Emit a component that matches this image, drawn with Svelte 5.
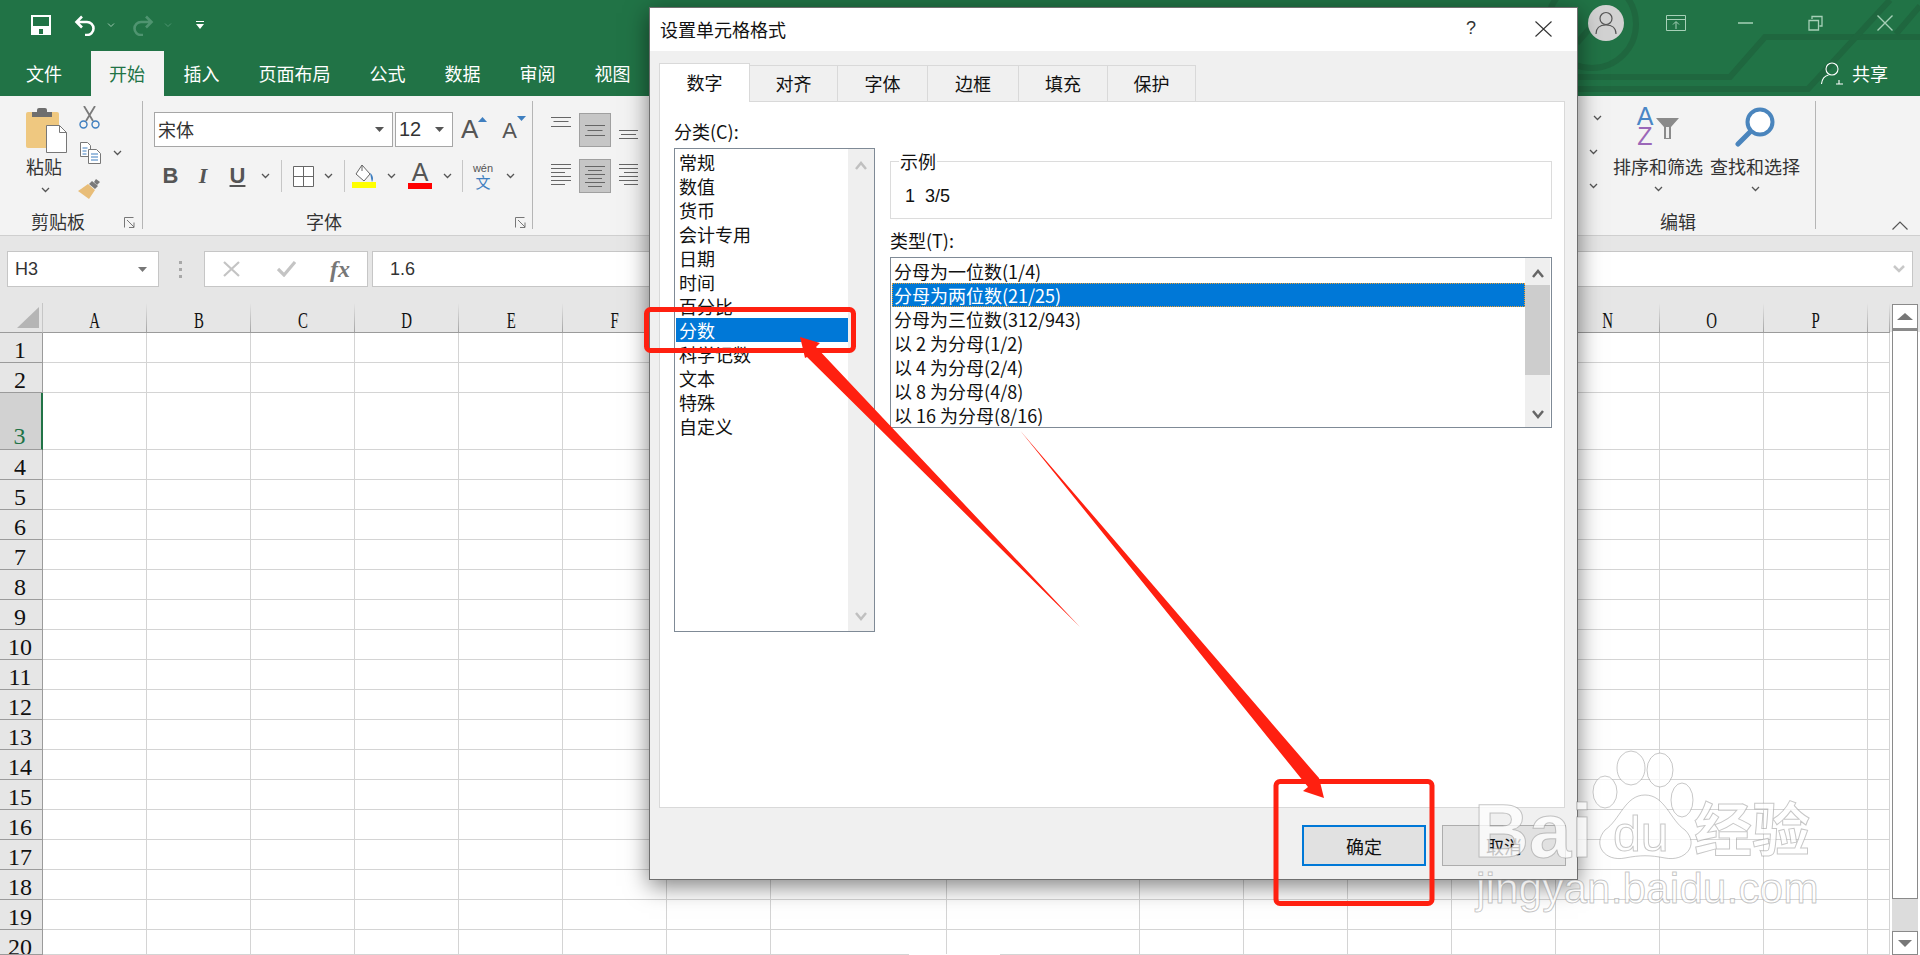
<script>
  const tabs = ['插入', '页面布局', '公式', '数据', '审阅', '视图'];
  const colNames = ['A','B','C','D','E','F','G','H','I','J','K','L','M','N','O','P',''];
  const rows = Array.from({ length: 20 }, (_, i) => i + 1);
  const categories = ['常规','数值','货币','会计专用','日期','时间','百分比','分数','科学记数','文本','特殊','自定义'];
  const types = ['分母为一位数(1/4)','分母为两位数(21/25)','分母为三位数(312/943)','以 2 为分母(1/2)','以 4 为分母(2/4)','以 8 为分母(4/8)','以 16 为分母(8/16)'];
  const dlgTabs = ['对齐','字体','边框','填充','保护'];
</script>

{#snippet chev()}
  <svg class="chev" width="9" height="6" viewBox="0 0 9 6"><path d="M1 1l3.5 3.5L8 1" fill="none" stroke="#555" stroke-width="1.3"/></svg>
{/snippet}
{#snippet launcher()}
  <svg class="launcher" width="12" height="11" viewBox="0 0 12 11"><path d="M.5 10.500V.5h9M3 3l7 7M10 5.500v5H5" fill="none" stroke="#777"/></svg>
{/snippet}
{#snippet lines(w, ys, ws, anchor)}
  <svg width={w} height={ys[ys.length-1]+1} viewBox="0 0 {w} {ys[ys.length-1]+1}">
    {#each ys as y, i}
      {@const lw = ws[i % ws.length]}
      {@const x = anchor === 'l' ? 0 : anchor === 'r' ? w - lw : (w - lw) / 2}
      <rect {x} {y} width={lw} height="1" fill="#666"/>
    {/each}
  </svg>
{/snippet}

<div class="app">
  <header class="top">
    <svg class="circuit" width="1920" height="96" viewBox="0 0 1920 96">
      <g fill="none" stroke="#1f673f" stroke-width="6">
        <circle cx="1592" cy="24" r="44"/>
        <path d="M1440 77H1730L1765 37H1920"/>
        <path d="M1440 89H1808L1890 0"/>
        <path d="M1577 43L1604 12"/>
        <path d="M1896 34L1920 6"/>
      </g>
    </svg>
    <div class="qat">
      <svg class="i-save" width="20" height="20" viewBox="0 0 20 20">
        <path d="M1 1h18v18H1z" fill="#217346" stroke="#fff" stroke-width="2"/>
        <path d="M1 11h18v8H1z" fill="#fff"/><path d="M8 14h4v5H8z" fill="#217346"/>
      </svg>
      <svg class="i-undo" width="22" height="21" viewBox="0 0 22 21"><path d="M8 1.500L2.500 7 8 12.500M3 7h10a6.500 6.500 0 0 1 0 13h-2" fill="none" stroke="#fff" stroke-width="2.600"/></svg>
      <svg class="q-chev" width="8" height="5" viewBox="0 0 8 5"><path d="M1 .5l3 3 3-3" fill="none" stroke="#9cc7ae"/></svg>
      <svg class="i-redo" width="22" height="21" viewBox="0 0 22 21"><path d="M14 1.500L19.500 7 14 12.500M19 7H9a6.500 6.500 0 0 0 0 13h2" fill="none" stroke="#4f9470" stroke-width="2.600"/></svg>
      <svg class="q-chev" width="8" height="5" viewBox="0 0 8 5"><path d="M1 .5l3 3 3-3" fill="none" stroke="#4f9470"/></svg>
      <svg class="i-cust" width="8" height="10" viewBox="0 0 8 10"><path d="M0 0h8v1H0zM0 3h8L4 8z" fill="#fff"/></svg>
      <div class="winbox">
        <div class="avatar">
          <svg width="22" height="24" viewBox="0 0 22 24"><circle cx="11" cy="7.500" r="6" fill="none" stroke="#555" stroke-width="1.200"/><path d="M1 23c0-6 4-9 10-9s10 3 10 9" fill="none" stroke="#555" stroke-width="1.200"/></svg>
        </div>
        <svg class="w w1" width="20" height="16" viewBox="0 0 20 16"><path d="M.5.500h19v15H.5zM.5 4.500h19M10 14V7M7 9.500L10 6.500l3 3" fill="none" stroke="#a6d0b7"/></svg>
        <svg class="w w2" width="15" height="2" viewBox="0 0 15 2"><path d="M0 1h15" stroke="#a6d0b7" stroke-width="1.500"/></svg>
        <svg class="w w3" width="15" height="16" viewBox="0 0 15 16"><path d="M1 5.500h9.500V15H1zM4 4V1.500h10V11h-2.500" fill="none" stroke="#a6d0b7" stroke-width="1.300"/></svg>
        <svg class="w w4" width="16" height="16" viewBox="0 0 16 16"><path d="M.5.500l15 15M15.500.5l-15 15" stroke="#a6d0b7" stroke-width="1.400"/></svg>
      </div>
    </div>
    <nav class="tabs">
      <span class="tab">文件</span>
      <span class="tab active">开始</span>
      {#each tabs as t}<span class="tab">{t}</span>{/each}
      <div class="share">
        <svg width="22" height="23" viewBox="0 0 22 23"><circle cx="11" cy="7" r="6" fill="none" stroke="#fff" stroke-width="1.100"/><path d="M.5 22c.5-5 3-8 7-9M15 22h7M18 18v4.500" fill="none" stroke="#fff" stroke-width="1.100"/></svg>
        <span>共享</span>
      </div>
    </nav>
  </header>

  <section class="ribbon">
    <div class="group g-clip">
      <div class="gbody clip">
        <div class="paste">
          <svg width="42" height="46" viewBox="0 0 42 46">
            <rect x="0" y="5" width="33" height="36" rx="2" fill="#efc880"/>
            <path d="M6 5h5V3a2 2 0 0 1 2-2h6a2 2 0 0 1 2 2v2h5v5H6z" fill="#6e6e6e"/>
            <path d="M20.500 18.500h13l7 7v20h-20z" fill="#fff" stroke="#777"/>
            <path d="M33.500 18.500v7h7" fill="none" stroke="#777"/>
          </svg>
          <span class="plabel">粘贴</span>
          {@render chev()}
        </div>
        <div class="clip-tools">
          <svg width="21" height="23" viewBox="0 0 21 23">
            <path d="M5 0l9 15M16 0L7 15" stroke="#7a7a7a" stroke-width="1.800" fill="none"/>
            <circle cx="4.500" cy="18.500" r="3.500" fill="none" stroke="#3f7fc0" stroke-width="1.400"/>
            <circle cx="16.500" cy="18.500" r="3.500" fill="none" stroke="#3f7fc0" stroke-width="1.400"/>
          </svg>
          <div class="copy-row">
            <svg width="21" height="22" viewBox="0 0 21 22">
              <path d="M.5.500h7l3 3v11H.5z" fill="#fff" stroke="#777"/>
              <path d="M8.500 7.500h8l4 4v10h-12z" fill="#fff" stroke="#777"/>
              <path d="M2.500 6h5M2.500 9h4M2.500 12h4M11 12h7M11 15h7M11 18h7" stroke="#3f7fc0"/>
            </svg>
            {@render chev()}
          </div>
          <svg width="24" height="21" viewBox="0 0 24 21">
            <path d="M14 3l6 5-3 3-6-5z" fill="#7a7a7a"/><path d="M18 1l4 3-3 3-3-3z" fill="#7a7a7a"/>
            <path d="M10 6l7 6-6 9-11-8 3-2z" fill="#e8bd78"/>
          </svg>
        </div>
      </div>
      <div class="glabel lab-clip"><span>剪贴板</span>{@render launcher()}</div>
    </div>

    <div class="group g-font">
      <div class="gbody fontb">
        <div class="f-row1">
          <div class="combo fname"><span>宋体</span><svg width="9" height="5" viewBox="0 0 9 5"><path d="M0 0h9L4.500 5z" fill="#555"/></svg></div>
          <div class="combo fsize"><span>12</span><svg width="9" height="5" viewBox="0 0 9 5"><path d="M0 0h9L4.500 5z" fill="#555"/></svg></div>
          <div class="grow"><span>A</span><svg width="9" height="5" viewBox="0 0 9 5"><path d="M0 5h9L4.500 0z" fill="#3f7fc0"/></svg></div>
          <div class="shrink"><span>A</span><svg width="9" height="5" viewBox="0 0 9 5"><path d="M0 0h9L4.500 5z" fill="#3f7fc0"/></svg></div>
        </div>
        <div class="f-row2">
          <b class="fb">B</b>
          <i class="fi">I</i>
          <span class="fu">U</span>
          {@render chev()}
          <span class="sep"></span>
          <svg width="21" height="21" viewBox="0 0 21 21"><path d="M.5.500h20v20H.5zM10.500.5v20M.5 10.500h20" fill="#fff" stroke="#666"/></svg>
          {@render chev()}
          <span class="sep"></span>
          <svg width="24" height="24" viewBox="0 0 24 24">
            <path d="M10 1l8 9-6 7-8-7z" fill="#fff" stroke="#666"/><path d="M10 1v6" stroke="#666"/>
            <path d="M18 9c3 2 4 6 2 9-1-3-1-5-2-9z" fill="#3f7fc0"/>
            <rect x="0" y="18" width="24" height="6" fill="#ffff00"/>
          </svg>
          {@render chev()}
          <div class="fcolor"><span>A</span><i></i></div>
          {@render chev()}
          <span class="sep"></span>
          <div class="wen"><span class="w-a">wén</span><span class="w-b">文</span></div>
          {@render chev()}
        </div>
      </div>
      <div class="glabel lab-font"><span>字体</span>{@render launcher()}</div>
    </div>

    <div class="group g-align">
      <div class="al-grid">
        <div class="al al-top">{@render lines(20, [0, 4, 9], [20, 15, 20], 'c')}</div>
        <div class="al-on">{@render lines(20, [0, 5, 10], [20, 15, 20], 'c')}</div>
        <div class="al al-bot">{@render lines(19, [0, 4, 8], [19, 15, 19], 'c')}</div>
        <div class="al">{@render lines(20, [0, 4, 8, 12, 16, 20], [20, 20, 14], 'l')}</div>
        <div class="al-on">{@render lines(20, [0, 4, 8, 12, 16, 20], [20, 14], 'c')}</div>
        <div class="al">{@render lines(19, [0, 4, 8, 12, 16, 20], [19, 19, 14], 'r')}</div>
      </div>
      <div class="al-chevs">{@render chev()}{@render chev()}{@render chev()}</div>
    </div>

    <div class="group g-edit">
      <div class="gbody edit">
        <div class="ebtn">
          <div class="eicon sort">
            <span class="az"><span class="a">A</span><span class="z">Z</span></span>
            <svg width="23" height="21" viewBox="0 0 23 21"><path d="M0 0h23l-8 9v12h-7V9z" fill="#8a8a8a"/><path d="M10 9h3v11h-3z" fill="#eee"/></svg>
          </div>
          <span>排序和筛选</span>
          {@render chev()}
        </div>
        <div class="ebtn">
          <div class="eicon">
            <svg width="40" height="40" viewBox="0 0 40 40"><circle cx="25" cy="15" r="12.500" fill="#fff" stroke="#4a85bd" stroke-width="4"/><path d="M15 25L3 37" stroke="#4a85bd" stroke-width="5" stroke-linecap="round"/></svg>
          </div>
          <span>查找和选择</span>
          {@render chev()}
        </div>
      </div>
      <div class="glabel lab-edit"><span>编辑</span></div>
    </div>

    <div class="collapse">
      <svg width="16" height="9" viewBox="0 0 16 9"><path d="M.5 8.500L8 1l7.500 7.500" fill="none" stroke="#555" stroke-width="1.200"/></svg>
    </div>
  </section>

  <section class="fbar">
    <div class="namebox"><span>H3</span><svg width="9" height="5" viewBox="0 0 9 5"><path d="M0 0h9L4.500 5z" fill="#777"/></svg></div>
    <div class="dots"><i></i><i></i><i></i></div>
    <div class="fxbox">
      <svg width="17" height="16" viewBox="0 0 17 16"><path d="M1 1l15 14M16 1L1 15" stroke="#c4c4c4" stroke-width="2.200"/></svg>
      <svg width="19" height="16" viewBox="0 0 19 16"><path d="M1 8l6 6L18 1" fill="none" stroke="#c4c4c4" stroke-width="3.200"/></svg>
      <span class="fx">fx</span>
    </div>
    <div class="finput">
      <span>1.6</span>
      <svg width="12" height="8" viewBox="0 0 12 8"><path d="M1 1l5 5 5-5" fill="none" stroke="#c8c8c8" stroke-width="2.500"/></svg>
    </div>
  </section>

  <section class="sheetwrap">
    <div class="grid">
      <div class="corner"><svg width="22" height="21" viewBox="0 0 22 21"><path d="M22 0v21H0z" fill="#b5b5b5"/></svg></div>
      {#each colNames as c}
        <div class="colh"><span>{c}</span></div>
      {/each}
      {#each rows as r}
        <div class="rowh" class:sel={r === 3}>{r}</div>
        {#each colNames as c}<div class="cell"></div>{/each}
      {/each}
    </div>
    <div class="vscroll">
      <div class="sb-up"><svg width="16" height="7" viewBox="0 0 16 7"><path d="M0 7h16L8 0z" fill="#777"/></svg></div>
      <div class="sb-track"></div>
      <div class="sb-rest"></div>
      <div class="sb-down"><svg width="14" height="7" viewBox="0 0 14 7"><path d="M0 0h14L7 7z" fill="#777"/></svg></div>
    </div>
  </section>

  <div class="dialog">
    <div class="dtitle">
      <span>设置单元格格式</span>
      <span class="help">?</span>
      <svg width="17" height="16" viewBox="0 0 17 16"><path d="M.5.500l16 15M16.500.5l-16 15" stroke="#333" stroke-width="1.100"/></svg>
    </div>
    <div class="dbody">
      <div class="dtabs">
        <span class="dtab on">数字</span>
        {#each dlgTabs as t}<span class="dtab">{t}</span>{/each}
      </div>
      <div class="panel">
        <div class="pleft">
          <div class="plabel2">分类(C):</div>
          <div class="list">
            <div class="items">
              {#each categories as c}
                <div class="item" class:selected={c === '分数'}>{c}</div>
              {/each}
            </div>
            <div class="strip light">
              <svg width="12" height="9" viewBox="0 0 12 9"><path d="M1 8l5-6 5 6" fill="none" stroke="#c0c0c0" stroke-width="2.500"/></svg>
              <svg width="12" height="9" viewBox="0 0 12 9"><path d="M1 1l5 6 5-6" fill="none" stroke="#c0c0c0" stroke-width="2.500"/></svg>
            </div>
          </div>
        </div>
        <div class="pright">
          <div class="sample">
            <span class="legend">示例</span>
            <div class="sval">1&nbsp; 3/5</div>
          </div>
          <div class="plabel3">类型(T):</div>
          <div class="tlist">
            <div class="titems">
              {#each types as t, i}
                <div class="titem" class:tsel={i === 1}>{t}</div>
              {/each}
            </div>
            <div class="tstrip">
              <div class="tarrow"><svg width="12" height="9" viewBox="0 0 12 9"><path d="M1 8l5-6 5 6" fill="none" stroke="#666" stroke-width="2.500"/></svg></div>
              <div class="thumb"></div>
              <div class="tarrow end"><svg width="12" height="9" viewBox="0 0 12 9"><path d="M1 1l5 6 5-6" fill="none" stroke="#666" stroke-width="2.500"/></svg></div>
            </div>
          </div>
        </div>
      </div>
      <div class="dfoot">
        <div class="btn primary">确定</div>
        <div class="btn">取消</div>
      </div>
    </div>
  </div>

  <svg class="overlay" width="1920" height="955" viewBox="0 0 1920 955">
    <rect x="909" y="954" width="91" height="1" fill="#fff"/>
    <g class="wm">
      <ellipse cx="1605" cy="792" rx="12" ry="16"/>
      <ellipse cx="1631" cy="768" rx="14" ry="17"/>
      <ellipse cx="1660" cy="770" rx="13" ry="17"/>
      <ellipse cx="1682" cy="800" rx="11" ry="17"/>
      <path d="M1645 795C1665 795 1670 820 1685 830C1700 845 1685 862 1665 858C1650 855 1640 855 1625 858C1605 862 1592 845 1605 830C1620 820 1625 795 1645 795Z"/>
      <text x="1474" y="857" class="wm-bai">Bai</text>
      <text x="1613" y="851" class="wm-du">du</text>
      <text x="1694" y="851" class="wm-jy">经验</text>
      <text x="1476" y="903" class="wm-url">jingyan.baidu.com</text>
    </g>
    <g fill="none" stroke="#ff2010" stroke-width="5" stroke-linejoin="round">
      <rect x="646.500" y="309.500" width="207" height="41" rx="4"/>
      <rect x="1276" y="781.500" width="156" height="122" rx="4"/>
    </g>
    <polygon fill="#ff2010" points="800,337 820,343 816,347 1080,627 807,357 805,358 802,345"/>
    <polygon fill="#ff2010" points="1020.500,431 1312,770 1319,778 1324,798 1303,791 1308,787"/>
  </svg>
</div>

<style>
  :global(body) { margin: 0; background: #fff; }
  .app {
    position: relative;
    width: 1920px;
    height: 955px;
    overflow: hidden;
    font-family: "Noto Sans CJK SC", "Liberation Sans", sans-serif;
    font-size: 18px;
    color: #333;
    background: #fff;
  }
  svg { display: block; flex: none; }

  /* title bar */
  .top { position: relative; height: 96px; background: #217346; }
  .circuit { position: absolute; left: 0; top: 0; }
  .qat { position: relative; display: flex; align-items: center; height: 51px; padding: 0 0 0 32px; }
  .i-save { margin-top: -2px; margin-left: -1px; }
  .i-undo { margin-left: 23px; margin-top: -1px; }
  .q-chev { margin-left: 11px; }
  .i-redo { margin-left: 17px; margin-top: -1px; }
  .i-redo + .q-chev { margin-left: 10px; }
  .i-cust { margin-left: 24px; }
  .winbox { display: flex; align-items: center; margin-left: auto; height: 46px; align-self: flex-start; }
  .avatar {
    display: flex; align-items: center; justify-content: center;
    width: 36px; height: 36px; border-radius: 50%; background: #d2d2d2;
  }
  .w1 { margin-left: 42px; }
  .w2 { margin-left: 52px; }
  .w3 { margin-left: 55px; }
  .w4 { margin-left: 54px; margin-right: 27px; }
  .tabs { position: relative; display: flex; height: 45px; padding-left: 6.5px; align-items: stretch; color: #fff; }
  .tab { display: flex; align-items: center; padding: 0 19.5px 2px; line-height: 1; white-space: nowrap; }
  .tab.active { background: #f3f3f3; color: #217346; margin-left: 9.5px; padding: 0 19px 2px 18px; }
  .share { display: flex; align-items: center; margin-left: auto; margin-right: 32px; gap: 9px; margin-top: -1px; }

  /* ribbon */
  .ribbon { display: flex; height: 139px; background: #f3f3f3; border-bottom: 1px solid #cfcfcf; }
  .group { display: flex; flex-direction: column; flex: none; height: 128px; margin-top: 5px; border-right: 1px solid #b5b5b5; box-sizing: border-box; }
  .gbody { flex: 1; min-height: 0; }
  .glabel { display: flex; align-items: center; height: 22px; line-height: 22px; margin-bottom: -3px; color: #333; white-space: nowrap; }
  .launcher { margin-left: auto; margin-top: 2px; }
  .chev { flex: none; }

  .g-clip { width: 143px; }
  .clip { display: flex; padding: 6px 0 0 25px; }
  .paste { display: flex; flex-direction: column; align-items: center; width: 42px; margin-left: 1px; }
  .paste svg:first-child { align-self: flex-start; }
  .plabel { margin-top: 2px; line-height: 22px; margin-left: -6px; white-space: nowrap; }
  .paste .chev { margin-top: 10px; margin-left: -4px; }
  .clip-tools { display: flex; flex-direction: column; margin-left: 11px; margin-top: -1px; }
  .copy-row { display: flex; align-items: center; margin-top: 13px; margin-left: 1px; gap: 12px; }
  .clip-tools > svg:last-child { margin-top: 14px; margin-left: -1px; }
  .lab-clip { padding: 0 6px 0 31px; }
  .lab-font { padding: 0 5px 0 163px; }

  .g-font { width: 390px; }
  .fontb { padding: 11px 0 0 11px; }
  .f-row1 { display: flex; align-items: stretch; height: 35px; }
  .combo { display: flex; align-items: center; justify-content: space-between; box-sizing: border-box; background: #fff; border: 1px solid #a6a6a6; padding: 0 8px 0 3px; }
  .fname { width: 239px; }
  .fname span { margin-top: -2px; }
  .fsize { width: 58px; margin-left: 2px; font-family: "Liberation Sans", sans-serif; font-size: 20px; }
  .grow, .shrink { display: flex; align-items: flex-start; font-family: "Liberation Sans", sans-serif; color: #555; line-height: 1; }
  .grow { margin-left: 8px; font-size: 26px; padding-top: 4px; }
  .shrink { margin-left: 15px; font-size: 22px; padding-top: 8px; }
  .grow svg { margin: 1px 0 0 0; }
  .shrink svg { margin: -4px 0 0 0; }
  .f-row2 {
    display: grid;
    grid-template-columns: 33px 32px 37px 18px 14px 31px 18px 14px 26px 28px 30px 24px 6px 36px 18px;
    justify-items: center; align-items: center;
    height: 32px; margin-top: 13px;
    color: #555;
    font-family: "Liberation Sans", sans-serif;
  }
  .fb { font-size: 22px; line-height: 1; }
  .fi { font-size: 22px; line-height: 1; font-family: "Liberation Serif", serif; font-weight: 700; }
  .fu { font-size: 22px; line-height: 1; font-weight: 700; text-decoration: underline; text-underline-offset: 2px; }
  .sep { width: 1px; height: 32px; background: #c6c6c6; }
  .fcolor { display: flex; flex-direction: column; align-items: center; width: 24px; font-size: 25px; line-height: 19px; }
  .fcolor i { display: block; width: 24px; height: 6px; background: #f00; margin-top: 1px; }
  .wen { display: flex; flex-direction: column; align-items: center; width: 22px; }
  .w-a { font-size: 11px; line-height: 11px; color: #555; }
  .w-b { font-size: 15px; line-height: 15px; color: #3f7fc0; font-family: "Noto Sans CJK SC", sans-serif; }

  .g-align { display: flex; width: 1072px; border-right: 0; flex-direction: row; padding: 12px 0 0 18px; }
  .al-grid { display: grid; grid-template-columns: 20px 32px 19px; column-gap: 8px; grid-template-rows: 34px 34px; row-gap: 12px; height: 80px; }
  .al { display: flex; justify-content: center; align-items: flex-start; padding-top: 5px; }
  .al-top { padding-top: 4px; }
  .al-bot { padding-top: 17px; }
  .al-on { display: flex; justify-content: center; align-items: center; background: #c6c6c6; border: 1px solid #a0a0a0; box-sizing: border-box; }
  .al-chevs { display: flex; flex-direction: column; align-items: flex-end; margin-left: auto; padding: 2px 3px 0 0; gap: 28px; }
  .al-chevs :global(svg:not(:first-child)) { margin-right: 4px; }

  .g-edit { width: 211px; }
  .edit { display: flex; gap: 7px; padding: 0 0 0 8px; }
  .ebtn { display: flex; flex-direction: column; align-items: center; width: 90px; white-space: nowrap; line-height: 22px; }
  .eicon { display: flex; height: 50px; align-items: flex-end; justify-content: center; padding-bottom: 4px; box-sizing: border-box; }
  .ebtn .eicon + span { margin-top: 4px; }
  .ebtn .chev { margin-top: 9px; }
  .sort { gap: 3px; align-items: flex-start; padding-top: 5px; }
  .sort svg { margin-top: 12px; }
  .az { display: flex; flex-direction: column; align-items: center; font-family: "Liberation Sans", sans-serif; font-size: 25px; line-height: 20px; font-weight: 400; }
  .a { color: #4a86c5; }
  .z { color: #9b67b8; }
  .lab-edit { padding-left: 55px; }
  .collapse { flex: 1; display: flex; justify-content: flex-end; align-items: flex-end; padding: 0 12px 5px 0; }

  /* formula bar */
  .fbar { display: flex; align-items: flex-start; box-sizing: border-box; height: 67px; padding: 15px 7px 0 7px; background: #e6e6e6; }
  .namebox, .fxbox, .finput { box-sizing: border-box; height: 36px; background: #fff; border: 1px solid #c6c6c6; }
  .namebox { display: flex; align-items: center; justify-content: space-between; width: 152px; padding: 0 11px 0 7px; font-family: "Liberation Sans", sans-serif; }
  .dots { display: flex; flex-direction: column; gap: 4px; margin: 10px 0 0 20px; }
  .dots i { display: block; width: 3px; height: 3px; background: #a8a8a8; }
  .fxbox { display: flex; align-items: center; width: 164px; margin-left: 22px; padding-left: 18px; }
  .fxbox svg:nth-child(2) { margin-left: 37px; }
  .fx { margin-left: 34px; font-family: "Liberation Serif", serif; font-style: italic; font-weight: 700; font-size: 24px; color: #777; }
  .finput { flex: 1; display: flex; align-items: center; justify-content: space-between; margin-left: 4px; padding: 0 7px 0 17px; font-family: "Liberation Sans", sans-serif; }

  /* sheet */
  .sheetwrap { display: flex; height: 652px; background: linear-gradient(#e6e6e6 29px, #fff 29px); }
  .grid {
    display: grid;
    grid-template-columns: 43px repeat(7, 104px) 176px 193px repeat(7, 104px) 22px;
    grid-template-rows: 30px 30px 30px 57px repeat(16, 30px) 25px;
    width: 1890px;
    flex: none;
  }
  .corner { display: flex; align-items: center; justify-content: flex-end; padding-right: 3px; box-sizing: border-box; background: #e6e6e6; border-bottom: 1px solid #9b9b9b; border-right: 1px solid #c6c6c6; }
  .colh {
    box-sizing: border-box; text-align: center; border-bottom: 1px solid #9b9b9b;
    background: linear-gradient(#e6e6e6, #a4a4a4) no-repeat right top / 1px 100%, #e6e6e6;
    padding-top: 3px; line-height: 28px; color: #111;
    font-family: "Liberation Serif", serif; font-size: 24px;
  }
  .colh span { display: inline-block; transform: scaleX(.62); }
  .rowh {
    box-sizing: border-box; background: #e6e6e6; border-bottom: 1px solid #9b9b9b; border-right: 1px solid #9b9b9b;
    text-align: center; padding: 3px 2px 0 0; line-height: 28px; overflow: hidden; color: #111;
    font-family: "Liberation Serif", serif; font-size: 24px;
  }
  .rowh.sel { background: #d2d2d2; color: #217346; padding-top: 29px; border-right: 2px solid #217346; }
  .cell { box-sizing: border-box; border-right: 1px solid #d4d4d4; border-bottom: 1px solid #d4d4d4; }
  .vscroll { display: flex; flex-direction: column; box-sizing: border-box; width: 26px; margin: 1px 0 0 2px; height: 651px; }
  .sb-up, .sb-down { display: flex; align-items: center; justify-content: center; box-sizing: border-box; background: #fff; border: 1px solid #8a8a8a; flex: none; }
  .sb-up { height: 27px; border-bottom-width: 3px; }
  .sb-track { height: 568px; box-sizing: border-box; border: 1px solid #8a8a8a; border-top: 0; background: #fff; flex: none; }
  .sb-rest { height: 32px; background: #dcdcdc; flex: none; }
  .sb-down { flex: 1; }

  /* dialog */
  .dialog {
    position: absolute; left: 649px; top: 7px; width: 929px; height: 873px; box-sizing: border-box;
    display: flex; flex-direction: column;
    background: #f0f0f0; border: 1px solid #6f6f6f;
    box-shadow: 0 6px 22px rgba(0,0,0,.5);
    color: #111;
  }
  .dtitle { display: flex; align-items: center; flex: none; height: 43px; box-sizing: border-box; padding: 0 25px 2px 10px; background: #fff; }
  .dtitle span:first-child { flex: 1; }
  .help { margin-right: 59px; color: #333; font-family: "Liberation Sans", sans-serif; }
  .dbody { flex: 1; display: flex; flex-direction: column; min-height: 0; }
  .dtabs { display: flex; align-items: flex-end; height: 50px; padding-left: 9px; box-sizing: border-box; flex: none; position: relative; z-index: 1; }
  .dtab { display: flex; align-items: center; justify-content: center; box-sizing: border-box; width: 88px; height: 36px; padding-bottom: 2px; background: #f0f0f0; border: 1px solid #d9d9d9; border-left: 0; border-bottom: 0; }
  .dtab:nth-child(3) { width: 90px; }
  .dtab:nth-child(4) { width: 91px; }
  .dtab:nth-child(5) { width: 89px; }
  .dtab.on { width: 91px; height: 39px; background: #fff; border-left: 1px solid #d9d9d9; margin-bottom: -1px; }
  .panel { display: flex; box-sizing: border-box; height: 707px; width: 906px; margin-left: 9px; padding: 18px 0 0 14px; background: #fff; border: 1px solid #d9d9d9; flex: none; }
  .pleft { width: 201px; flex: none; }
  .plabel2, .plabel3 { line-height: 24px; }
  .plabel2 { margin: -1px 0 2px; }
  .list { display: flex; box-sizing: border-box; height: 484px; margin-top: 5px; border: 1px solid #7f8a96; background: #fff; }
  .items { flex: 1; padding: 1px 0 0 1px; }
  .item { line-height: 24px; height: 24px; padding-left: 3px; }
  .item.selected { background: #0078d7; color: #fff; }
  .strip { display: flex; flex-direction: column; justify-content: space-between; align-items: center; box-sizing: border-box; flex: none; width: 26px; background: #efefef; padding: 12px 0 10px; }
  .pright { width: 662px; margin-left: 15px; flex: none; }
  .sample { box-sizing: border-box; height: 58px; margin-top: 41px; border: 1px solid #dcdcdc; padding-left: 8px; }
  .legend { display: block; width: max-content; padding: 0 1px; margin-top: -13px; line-height: 24px; background: #fff; }
  .sval { margin: 11px 0 0 6px; line-height: 24px; font-family: "Liberation Sans", sans-serif; white-space: pre; }
  .plabel3 { margin-top: 9px; }
  .tlist { display: flex; box-sizing: border-box; height: 171px; width: 662px; margin-top: 5px; border: 1px solid #7f8a96; overflow: hidden; }
  .titems { flex: 1; padding: 1px 0 0 1px; overflow: hidden; min-width: 0; }
  .titem { height: 24px; line-height: 24px; padding-left: 2px; white-space: pre; }
  .titem.tsel { background: #0078d7; color: #fff; outline: 1px dotted #f0a030; outline-offset: -1px; }
  .tstrip { display: flex; flex-direction: column; flex: none; width: 25px; margin-right: 1px; background: #efefef; }
  .tarrow { display: flex; justify-content: center; align-items: center; height: 27px; flex: none; padding-top: 4px; box-sizing: border-box; }
  .tarrow.end { margin-top: auto; padding: 0; height: 26px; }
  .thumb { height: 90px; background: #cdcdcd; flex: none; }
  .dfoot { display: flex; justify-content: flex-end; gap: 16px; padding: 17px 11px 0 0; flex: none; }
  .btn { display: flex; align-items: center; justify-content: center; box-sizing: border-box; width: 124px; height: 41px; background: #e1e1e1; border: 1px solid #adadad; }
  .btn.primary { border: 2px solid #0078d7; }

  /* annotation + watermark overlay */
  .overlay { position: absolute; left: 0; top: 0; pointer-events: none; }
  .wm { fill: rgba(255,255,255,.75); stroke: rgba(130,130,130,.45); stroke-width: 1; }
  .wm text { font-family: "Liberation Sans", sans-serif; }
  .wm-bai { font-size: 76px; font-weight: 700; }
  .wm-du { font-size: 50px; }
  .wm .wm-jy { font-size: 58px; font-family: "Noto Sans CJK SC", sans-serif; font-weight: 700; }
  .wm-url { font-size: 42.500px; }
</style>
